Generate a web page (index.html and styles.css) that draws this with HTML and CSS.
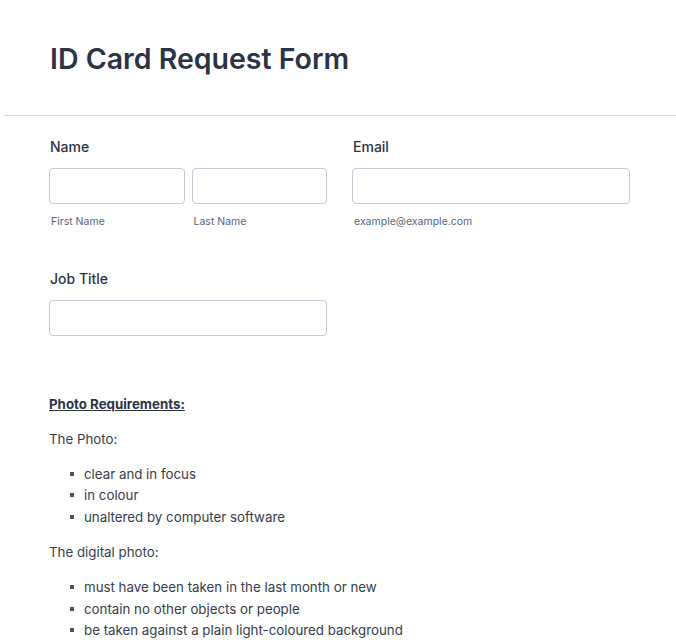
FILE: index.html
```html
<!DOCTYPE html>
<html lang="en">
<head>
    <meta charset="UTF-8">
    <meta name="viewport" content="width=device-width, initial-scale=1.0">
    <title>ID Card Request Form</title>
    <link rel="stylesheet" href="styles.css">
</head>
<body>
    <div class="form-card">
        <div class="form-header">
            <h1>ID Card Request Form</h1>
        </div>

        <form class="form-body">
            <div class="form-row">
                <div class="form-group">
                    <label>Name</label>
                    <div class="name-inputs">
                        <div class="sub-field">
                            <input type="text" id="firstName">
                            <span class="sublabel">First Name</span>
                        </div>
                        <div class="sub-field">
                            <input type="text" id="lastName">
                            <span class="sublabel">Last Name</span>
                        </div>
                    </div>
                </div>
                <div class="form-group">
                    <label for="email">Email</label>
                    <div class="sub-field">
                        <input type="email" id="email">
                        <span class="sublabel">example@example.com</span>
                    </div>
                </div>
            </div>

            <div class="form-row">
                <div class="form-group">
                    <label for="jobTitle">Job Title</label>
                    <input type="text" id="jobTitle">
                </div>
            </div>

            <div class="requirements">
                <p class="req-title">Photo Requirements:</p>
                <p>The Photo:</p>
                <ul>
                    <li>clear and in focus</li>
                    <li>in colour</li>
                    <li>unaltered by computer software</li>
                </ul>
                <p>The digital photo:</p>
                <ul>
                    <li>must have been taken in the last month or new</li>
                    <li>contain no other objects or people</li>
                    <li>be taken against a plain light-coloured background</li>
                </ul>
            </div>
        </form>
    </div>
</body>
</html>
```

FILE: styles.css
```css
* {
    margin: 0;
    padding: 0;
    box-sizing: border-box;
}

body {
    font-family: Inter, 'Noto Sans', sans-serif;
    background: #fff;
    color: #2c3345;
}

.form-card {
    margin: 3px 0 0 3px;
    background: white;
    border-top-left-radius: 16px;
}

.form-header {
    padding: 37px 46px 0 47px;
    height: 113px;
    border-bottom: 1px solid #d8dae0;
}

.form-header h1 {
    font-size: 28.5px;
    font-weight: 600;
    line-height: 38px;
    color: #2c3345;
}

.form-body {
    padding: 21px 46px 0;
}

.form-row {
    display: flex;
    gap: 25px;
    margin-bottom: 40px;
}

.form-group {
    width: 278px;
}

.form-group label {
    display: block;
    padding-left: 1px;
    font-size: 14px;
    font-weight: 500;
    line-height: 20px;
    margin-bottom: 11px;
    color: #2c3345;
}

.name-inputs {
    display: flex;
    gap: 7px;
}

.sub-field {
    flex: 1;
}

.form-group input {
    display: block;
    width: 100%;
    height: 36px;
    border: 1px solid #c3cad8;
    border-radius: 4px;
    background: white;
}

.sublabel {
    display: block;
    padding-left: 2px;
    font-size: 10.5px;
    line-height: 14px;
    margin-top: 11px;
    color: #57647e;
}

.requirements {
    padding-top: 17.5px;
    font-size: 13.3px;
    color: #363d4c;
}

.requirements p {
    line-height: 21.3px;
    margin-bottom: 14px;
}

.requirements .req-title {
    font-weight: 700;
    text-decoration: underline;
    color: #2c3345;
}

.requirements ul {
    list-style: none;
    padding-left: 21px;
    margin-bottom: 14px;
}

.requirements li {
    line-height: 21.3px;
}

.requirements li::before {
    content: "";
    display: inline-block;
    width: 4px;
    height: 4px;
    margin-right: 10px;
    background: #4a5263;
    vertical-align: 3px;
}
```
